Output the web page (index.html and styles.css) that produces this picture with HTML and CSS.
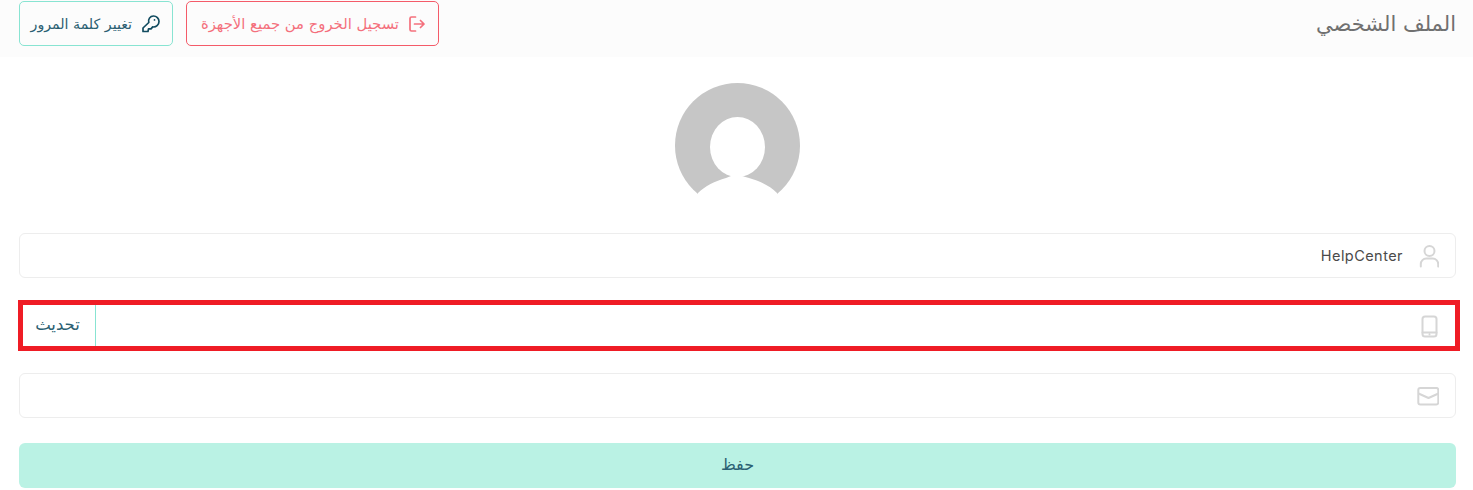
FILE: index.html
```html
<!DOCTYPE html>
<html lang="ar" dir="rtl">
<head>
  <meta charset="UTF-8">
  <meta name="viewport" content="width=device-width, initial-scale=1.0">
  <title>الملف الشخصي</title>
  <link rel="stylesheet" href="styles.css">
</head>
<body>

  <header class="topbar">
    <h1 class="pagetitle">الملف الشخصي</h1>
    <div class="actions">
      <button class="actionbutton logoutbutton">
        <svg class="logouticon" viewBox="0 0 16 16" fill="none" stroke="currentColor" stroke-width="1.700" stroke-linecap="round" stroke-linejoin="round">
          <path d="M6.500 1H2.500A1.500 1.500 0 0 0 1 2.500v11A1.500 1.500 0 0 0 2.500 15h4"/>
          <path d="M5.500 8h9.500M11.500 4.500 15 8l-3.500 3.500"/>
        </svg>
        <span>تسجيل الخروج من جميع الأجهزة</span>
      </button>
      <button class="actionbutton passwordbutton">
        <svg class="keyicon" viewBox="0 0 18 18" fill="none" stroke="#114b5f" stroke-width="1.700" stroke-linecap="round" stroke-linejoin="round">
          <path d="M11.500 1a5.500 5.500 0 0 1 5.500 5.500c0 3.400-3 6-6.300 5.400l-1.700 2H6.500l-.5 2.600H1V13l5.800-5.500C5.800 4.500 8 1 11.500 1z"/>
          <path d="M12.500 4.800v.1"/>
        </svg>
        <span>تغيير كلمة المرور</span>
      </button>
    </div>
  </header>

  <main class="content">
    <div class="avatarwrap">
      <svg class="avatar" width="125" height="125" viewBox="0 0 125 125">
        <circle cx="62.500" cy="62.500" r="62.500" fill="#c6c6c6"/>
        <ellipse cx="62.500" cy="64" rx="27.500" ry="30" fill="#fff"/>
        <path d="M23 110c7-7 17-12 28-15l5-2h11l7 2c11 3 21 8 28 15v15H23z" fill="#fff"/>
      </svg>
    </div>

    <div class="field">
      <svg class="fieldicon" viewBox="0 0 22 24" fill="none" stroke="currentColor" stroke-width="2" stroke-linecap="round">
        <circle cx="12.500" cy="7" r="5"/>
        <path d="M3.800 22.500v-2.500a5.500 5.500 0 0 1 5.500-5.500h6.400a5.500 5.500 0 0 1 5.500 5.500v2.500"/>
      </svg>
      <span class="fieldvalue">HelpCenter</span>
    </div>

    <div class="field phonefield">
      <svg class="fieldicon" viewBox="0 0 22 24" fill="none" stroke="currentColor" stroke-width="2" stroke-linecap="round">
        <rect x="5.500" y="2.500" width="14" height="20" rx="2.500"/>
        <path d="M5.500 18.500h14M12.500 20.500v.1"/>
      </svg>
      <span class="fieldvalue"></span>
      <button class="updatebutton">تحديث</button>
      <div class="highlight"></div>
    </div>

    <div class="field">
      <svg class="fieldicon" viewBox="0 0 22 24" fill="none" stroke="currentColor" stroke-width="2" stroke-linejoin="round">
        <rect x="1.300" y="4" width="20" height="16.500" rx="2"/>
        <path d="M1.500 9.500l10 4.500 10-4.500"/>
      </svg>
      <span class="fieldvalue"></span>
    </div>

    <button class="savebutton">حفظ</button>
  </main>

</body>
</html>
```

FILE: styles.css
```css
body {
  margin: 0;
  background-color: #fff;
  font-family: "DejaVu Sans", sans-serif;
  color: #114b5f;
}
button {
  font-family: inherit;
  cursor: pointer;
}
.topbar {
  height: 57px;
  box-sizing: border-box;
  padding: 1px 17px 0 34px;
  background-color: #fcfcfc;
  display: flex;
  justify-content: space-between;
  align-items: flex-start;
}
.pagetitle {
  margin: 9px 0 0;
  font-size: 21px;
  font-weight: 400;
  color: #707070;
  line-height: 28px;
}
.actions {
  display: flex;
  gap: 13px;
  margin-left: -15px;
}
.actionbutton {
  height: 45px;
  box-sizing: border-box;
  padding: 0 13px;
  display: flex;
  align-items: center;
  gap: 10px;
  background-color: transparent;
  border-radius: 5px;
  white-space: nowrap;
}
.logoutbutton {
  width: 253px;
  border: 1px solid #f45b69;
  color: #f4707c;
  font-size: 14.800px;
}
.passwordbutton {
  width: 154px;
  padding: 0 12px;
  border: 1px solid #88e4d2;
  color: #2b6072;
  font-size: 14.200px;
}
.logouticon {
  width: 16px;
  height: 16px;
  flex-shrink: 0;
}
.keyicon {
  width: 18px;
  height: 18px;
  flex-shrink: 0;
}
.content {
  padding: 0 17px 0 19px;
}
.avatarwrap {
  display: flex;
  justify-content: center;
  padding: 26px 0 25px;
  height: 125px;
}
.field {
  position: relative;
  height: 45px;
  box-sizing: border-box;
  margin-bottom: 25px;
  padding-right: 16px;
  display: flex;
  align-items: center;
  gap: 14px;
  border: 1px solid #ededed;
  border-radius: 6px;
}
.fieldicon {
  width: 22px;
  height: 24px;
  color: #d6d6d6;
  flex-shrink: 0;
}
.fieldvalue {
  flex: 1;
  font-family: Inter, sans-serif;
  font-size: 14.500px;
  letter-spacing: .45px;
  color: #4a4a4a;
}
.phonefield {
  border-color: #fff;
}
.updatebutton {
  width: 76px;
  height: 100%;
  padding: 0 0 3px;
  background-color: transparent;
  border: none;
  border-right: 1px solid #88e4d2;
  font-size: 16.500px;
  color: #2b6072;
}
.highlight {
  position: absolute;
  inset: -4px -5px -4px -2px;
  border: 5px solid #ef1c25;
}
.savebutton {
  display: block;
  width: 100%;
  height: 45px;
  padding-bottom: 3px;
  background-color: #baf2e4;
  border: none;
  border-radius: 6px;
  font-size: 16px;
  color: #2b6072;
}
```
